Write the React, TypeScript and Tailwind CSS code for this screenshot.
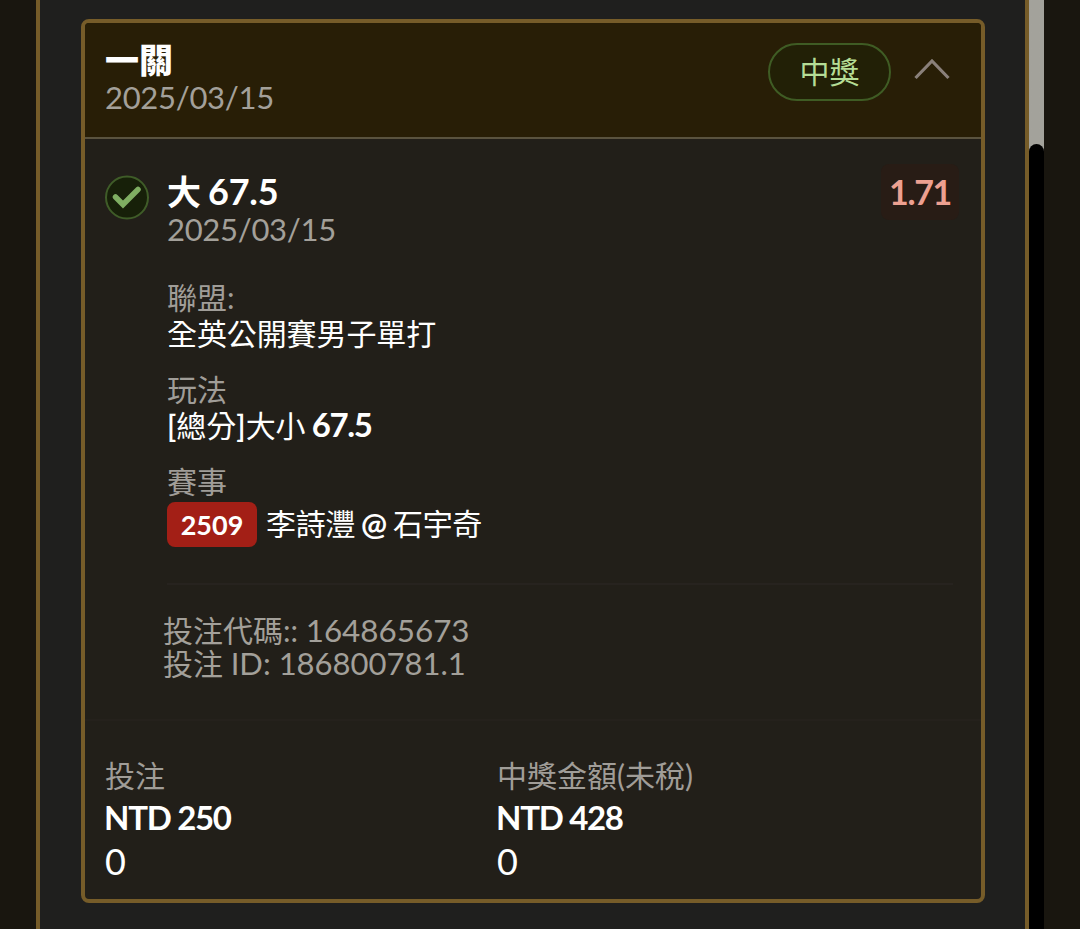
import type { ReactNode } from "react";
import clsx from "clsx";

const amounts = [
  { label: "投注", value: "NTD 250", extra: "0" },
  { label: "中獎金額(未稅)", value: "NTD 428", extra: "0" },
];

function Label({ children }: { children: ReactNode }) {
  return <div className="h-[36px] text-[30px] leading-[34px] text-[#a09d98]">{children}</div>;
}

function DateText({ children }: { children: ReactNode }) {
  return (
    <div className="h-[38px] text-[31px] leading-[36px] tracking-[-0.3px] text-[#a3a09a]">
      {children}
    </div>
  );
}

function CheckBadge() {
  return (
    <svg width="44" height="46" viewBox="0 0 44 46" fill="none">
      <circle cx="22" cy="23.5" r="21" fill="#172009" stroke="#3f5c28" strokeWidth="2" />
      <path d="M10.5 23 L18 30.5 L33 15.5" stroke="#7fae62" strokeWidth="5.5" strokeLinecap="round" />
    </svg>
  );
}

function CardHeader() {
  return (
    <div className="flex h-[116px] justify-between border-b-2 border-[#5a533f] bg-[#281e06] pl-5 pr-[31px] pt-[18px]">
      <div>
        <div className="text-[34px] font-black leading-[38px] text-white">一關</div>
        <DateText>2025/03/15</DateText>
      </div>
      <div className="flex items-start gap-[23px] pt-[2px]">
        <div className="flex h-[58px] w-[123px] items-center justify-center rounded-full border-2 border-[#3f5c24] bg-[#222006] pb-[2px] text-[30px] leading-none text-[#b5dd95]">
          中獎
        </div>
        <svg className="mt-[15px]" width="36" height="22" viewBox="0 0 36 22" fill="none">
          <path d="M1.5 20 L18 3 L34.5 20" stroke="#8a807a" strokeWidth="3.2" />
        </svg>
      </div>
    </div>
  );
}

function BetDetails() {
  return (
    <div className="flex h-[582px] border-b-2 border-[#25211c] pl-5 pr-7 pt-[35px]">
      <div className="w-[62px] shrink-0">
        <CheckBadge />
      </div>
      <div className="flex-1">
        <div className="flex justify-between">
          <div>
            <div className="h-[37px] text-[34px] font-bold leading-[34px] text-white">
              大<span className="ml-[7px] text-[36px] tracking-[-0.2px]">67.5</span>
            </div>
            <DateText>2025/03/15</DateText>
          </div>
          <div className="-mr-[6px] -mt-[10px] flex h-[56px] w-[78px] items-center justify-center rounded-lg bg-[#281c15] pb-px text-[34px] font-bold tracking-[-1.3px] text-[#eda091]">
            1.71
          </div>
        </div>

        <div className="mt-[31px]">
          <Label>聯盟:</Label>
          <div className="h-[56px] text-[30px] leading-[34px] tracking-[-0.1px] text-white">
            全英公開賽男子單打
          </div>
          <Label>玩法</Label>
          <div className="h-[56px] text-[30px] leading-[32px] text-white">
            <span className="font-semibold">[</span>總分<span className="font-semibold">]</span>大小
            <span className="ml-[6px] text-[33px] font-bold tracking-[-1.3px]">67.5</span>
          </div>
          <Label>賽事</Label>
          <div className="mt-[2px] flex h-[45px] items-center text-[30px] text-white">
            <span className="mr-[9px] flex h-[45px] w-[90px] items-center justify-center rounded-lg bg-[#a31f16] pt-px text-[27px] font-bold">
              2509
            </span>
            <span className="pb-[2px] tracking-[-0.3px]">
              李詩灃<span className="mx-[6px] text-[31px] font-bold">@</span>石宇奇
            </span>
          </div>
        </div>

        <div className="mt-[36px] h-[2px] bg-[#27231f]" />
        <div className="-ml-1 mt-[29px] text-[30px] leading-[33px] text-[#a3a09a]">
          <div>
            投注代碼:: <span className="text-[31.4px]">164865673</span>
          </div>
          <div>
            投注 <span className="text-[31px]">ID: 186800781.1</span>
          </div>
        </div>
      </div>
    </div>
  );
}

export default function App() {
  return (
    <div
      lang="zh-Hant"
      className="flex h-[929px] w-[1080px] overflow-hidden whitespace-nowrap bg-[#19160f] font-[Lato,'Noto_Sans_CJK_TC',sans-serif]"
    >
      <div className="w-[36px] shrink-0" />
      <main className="w-[993px] shrink-0 border-x-4 border-[#765c29] bg-[#1f1f1e] pl-[41px] pt-[19px]">
        <section className="h-[884px] w-[904px] overflow-hidden rounded-lg border-4 border-[#765c29] bg-[#221f19]">
          <CardHeader />
          <BetDetails />
          <div className="flex pl-5 pt-[37px]">
            {amounts.map((item, i) => (
              <div key={item.label} className={clsx(i === 0 && "w-[392px]")}>
                <Label>{item.label}</Label>
                <div className="-ml-px text-[33px] font-bold leading-[46px] tracking-[-1.3px] text-white">
                  {item.value}
                </div>
                <div className="text-[36px] leading-[42px] text-white">{item.extra}</div>
              </div>
            ))}
          </div>
        </section>
      </main>
      <div className="w-[15px] shrink-0 bg-gradient-to-b from-[#a3a29b] from-[152px] to-black to-[152px]">
        <div className="mt-[144px] h-[785px] rounded-t-full bg-black" />
      </div>
    </div>
  );
}
